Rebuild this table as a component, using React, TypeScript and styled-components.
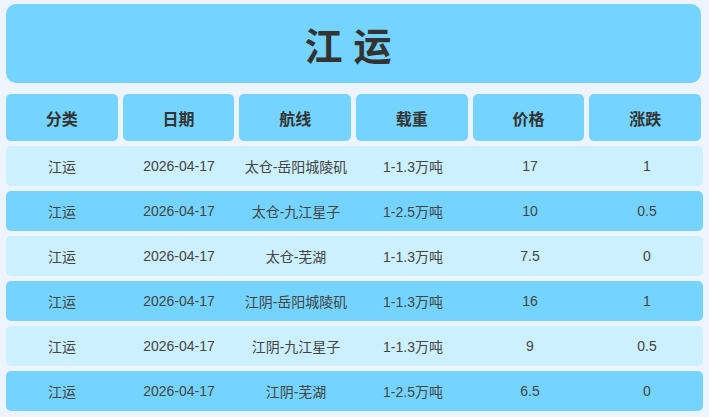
import React from 'react';
import styled, { createGlobalStyle } from 'styled-components';

const GlobalStyle = createGlobalStyle`
  html, body {
    margin: 0;
    padding: 0;
    background-color: #eef4fe;
    font-family: "Liberation Sans", "Noto Sans CJK SC", sans-serif;
  }
`;

const Page = styled.div`
  padding: 4px 6px 6px 6px;
  width: 697px;
`;

const TitleBox = styled.div`
  width: 695px;
  height: 79px;
  border-radius: 10px;
  background-color: #74d4fe;
  display: flex;
  align-items: center;
  justify-content: center;
`;

const Title = styled.h1`
  margin: 0;
  font-size: 38px;
  font-weight: bold;
  letter-spacing: 11px;
  color: #333;
`;

const HeaderRow = styled.div`
  margin-top: 11px;
  width: 695px;
  display: grid;
  grid-template-columns: repeat(6, 1fr);
  gap: 5px;
`;

const HeaderCell = styled.div`
  height: 47px;
  border-radius: 5px;
  background-color: #74d4fe;
  display: flex;
  align-items: center;
  justify-content: center;
  font-size: 16px;
  font-weight: bold;
  color: #333;
`;

const Body = styled.div`
  margin-top: 5px;
  display: flex;
  flex-direction: column;
  gap: 5px;
`;

const Row = styled.div<{ $dark: boolean }>`
  height: 40px;
  width: 697px;
  border-radius: 5px;
  background-color: ${(p) => (p.$dark ? '#74d4fe' : '#cdf0fe')};
  display: grid;
  grid-template-columns: repeat(6, 117px);
  justify-content: center;
  align-items: center;
`;

const Cell = styled.div`
  text-align: center;
  font-size: 14px;
  color: #444;
`;

const headers = ['分类', '日期', '航线', '载重', '价格', '涨跌'];

type Quote = {
  category: string;
  date: string;
  route: string;
  load: string;
  price: string;
  change: string;
};

const quotes: Quote[] = [
  { category: '江运', date: '2026-04-17', route: '太仓-岳阳城陵矶', load: '1-1.3万吨', price: '17', change: '1' },
  { category: '江运', date: '2026-04-17', route: '太仓-九江星子', load: '1-2.5万吨', price: '10', change: '0.5' },
  { category: '江运', date: '2026-04-17', route: '太仓-芜湖', load: '1-1.3万吨', price: '7.5', change: '0' },
  { category: '江运', date: '2026-04-17', route: '江阴-岳阳城陵矶', load: '1-1.3万吨', price: '16', change: '1' },
  { category: '江运', date: '2026-04-17', route: '江阴-九江星子', load: '1-1.3万吨', price: '9', change: '0.5' },
  { category: '江运', date: '2026-04-17', route: '江阴-芜湖', load: '1-2.5万吨', price: '6.5', change: '0' },
];

export default function App() {
  return (
    <>
      <GlobalStyle />
      <Page>
        <TitleBox>
          <Title>江运</Title>
        </TitleBox>
        <HeaderRow>
          {headers.map((h) => (
            <HeaderCell key={h}>{h}</HeaderCell>
          ))}
        </HeaderRow>
        <Body>
          {quotes.map((q, i) => (
            <Row key={i} $dark={i % 2 === 1}>
              <Cell>{q.category}</Cell>
              <Cell>{q.date}</Cell>
              <Cell>{q.route}</Cell>
              <Cell>{q.load}</Cell>
              <Cell>{q.price}</Cell>
              <Cell>{q.change}</Cell>
            </Row>
          ))}
        </Body>
      </Page>
    </>
  );
}
